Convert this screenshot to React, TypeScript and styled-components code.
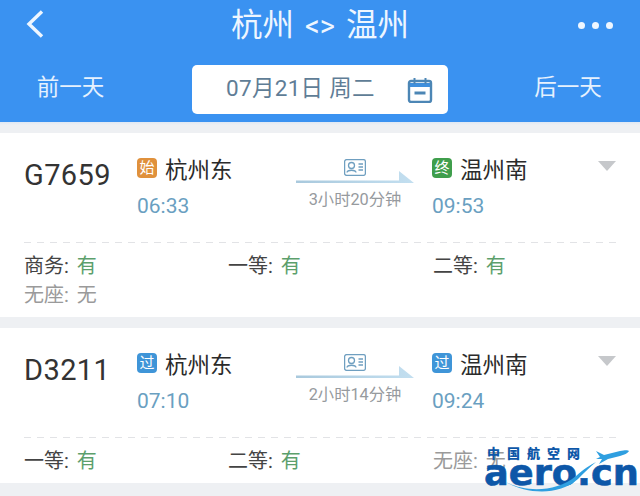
import React from "react";
import styled, { createGlobalStyle } from "styled-components";

const GlobalStyle = createGlobalStyle`
  html, body {
    margin: 0;
    padding: 0;
    background: #eef0f3;
    overflow: hidden;
  }
  * {
    box-sizing: border-box;
  }
`;

const FONT = `"Roboto", "Noto Sans CJK SC", sans-serif`;

const Page = styled.div`
  position: relative;
  width: 640px;
  height: 496px;
  overflow: hidden;
  font-family: ${FONT};
  background: #eef0f3;
`;

const Header = styled.header`
  height: 122px;
  background: #3a92f1;
  padding-top: 6px;
`;

const TopRow = styled.div`
  display: grid;
  grid-template-columns: 96px 1fr 96px;
  align-items: center;
  height: 40px;
  color: #eef6ff;
`;

const BackButton = styled.div`
  padding-left: 24px;
  padding-bottom: 5px;
  display: flex;
  align-items: center;
`;

const Title = styled.div`
  text-align: center;
  font-size: 31.5px;
  line-height: 40px;
  white-space: nowrap;
`;

const Arrows = styled.span`
  font-size: 29px;
  margin: 0 11px;
`;

const Dots = styled.div`
  display: flex;
  justify-content: flex-end;
  gap: 7px;
  padding-right: 27px;
  padding-bottom: 2px;
`;

const Dot = styled.span`
  width: 7px;
  height: 7px;
  border-radius: 50%;
  background: #eef6ff;
`;

const DateRow = styled.div`
  display: grid;
  grid-template-columns: 192px 256px 192px;
  margin-top: 19px;
  align-items: center;
`;

const DayLink = styled.div<{ $left?: boolean }>`
  color: #e6f1fe;
  font-size: 22.5px;
  line-height: 45px;
  padding-bottom: 4px;
  text-align: center;
  padding-right: ${(p) => (p.$left ? "51px" : "0")};
  padding-left: ${(p) => (p.$left ? "0" : "48px")};
`;

const DateBox = styled.div`
  height: 49px;
  background: #fff;
  border-radius: 5px;
  color: #5f7d96;
  font-size: 22.5px;
  display: flex;
  align-items: center;
  justify-content: space-between;
  padding: 0 15px 0 34px;
  letter-spacing: 0.3px;
`;

const DateText = styled.span`
  padding-bottom: 7px;
`;

const HeaderEdge = styled.div`
  height: 11px;
  background: linear-gradient(#dfe8f4 0, #eef0f3 3px);
`;

const Card = styled.section<{ $tall?: boolean }>`
  height: ${(p) => (p.$tall ? "184px" : "155px")};
  background: #fff;
  padding: 17px 24px 0;
  margin-bottom: 11px;
`;

const TrainRow = styled.div`
  display: grid;
  grid-template-columns: 113px 159px 136px 164px 1fr;
  height: 92px;
`;

const TrainNo = styled.div`
  font-size: 29px;
  line-height: 40px;
  padding-top: 5px;
  color: #333;
  letter-spacing: 0.4px;
`;

const Stop = styled.div`
  display: flex;
  flex-direction: column;
`;

const StationLine = styled.div`
  display: flex;
  align-items: center;
  gap: 8px;
  height: 36px;
  font-size: 22.5px;
  color: #2b2b2b;
`;

const Tag = styled.span<{ $bg: string }>`
  width: 20px;
  height: 20px;
  border-radius: 4px;
  background: ${(p) => p.$bg};
  color: #fff;
  font-size: 15px;
  line-height: 20px;
  text-align: center;
`;

const Time = styled.div`
  font-size: 21px;
  line-height: 30px;
  margin-top: 5px;
  color: #6a9fc1;
`;

const Middle = styled.div`
  width: 118px;
  display: flex;
  flex-direction: column;
  align-items: center;
  padding-top: 9px;
`;

const RouteSvg = styled.svg`
  margin-top: -5px;
  flex: none;
`;

const Duration = styled.div`
  font-size: 16.3px;
  line-height: 20px;
  margin-top: 6px;
  color: #969a9e;
  white-space: nowrap;
`;

const Caret = styled.div`
  justify-self: end;
  width: 0;
  height: 0;
  margin-top: 11px;
  border-left: 9px solid transparent;
  border-right: 9px solid transparent;
  border-top: 10px solid #c6c8cb;
`;

const DashLine = styled.div`
  height: 1px;
  background: repeating-linear-gradient(90deg, #e2e3e6 0 7px, transparent 7px 13px);
`;

const Seats = styled.div`
  display: grid;
  grid-template-columns: 204px 205px 1fr;
  padding-top: 9px;
`;

const Seat = styled.div<{ $muted?: boolean }>`
  font-size: 20px;
  line-height: 29px;
  color: ${(p) => (p.$muted ? "#9a9a9a" : "#444")};
`;

const SeatValue = styled.span<{ $muted?: boolean }>`
  margin-left: 8px;
  color: ${(p) => (p.$muted ? "#9a9a9a" : "#5c9f6c")};
`;

const Watermark = styled.div`
  position: absolute;
  left: 484px;
  top: 447px;
  width: 156px;
  height: 49px;
  color: #0d57a8;
`;

const MarkCn = styled.div`
  display: flex;
  gap: 7px;
  padding-left: 3px;
  font-size: 13px;
  line-height: 14px;
  font-weight: 900;
`;

const MarkLatin = styled.div`
  font-family: "DejaVu Sans", sans-serif;
  font-size: 36px;
  line-height: 30px;
  margin-top: -3px;
  font-weight: 700;
  -webkit-text-stroke: 0.6px #0d57a8;
  white-space: nowrap;
  transform: scaleX(1.02);
  transform-origin: left;
`;

const MarkArt = styled.svg`
  position: absolute;
  left: 0;
  top: 0;
`;

function ChevronBack() {
  return (
    <svg width="22" height="30" viewBox="0 0 22 30" fill="none">
      <path d="M18 2.5 L5 15 L18 27.5" stroke="#eef6ff" strokeWidth="3.4" />
    </svg>
  );
}

function CalendarIcon() {
  return (
    <svg width="26" height="26" viewBox="0 0 26 26" fill="none" stroke="#4c86b5" strokeWidth="2.4">
      <rect x="2" y="4" width="22" height="21" rx="2" />
      <path d="M3 6 H23 V10 H3 Z" fill="#3f8fdc" stroke="none" />
      <path d="M7.5 1 V7 M18.5 1 V7" strokeWidth="2" />
      <path d="M7.5 16 H18.5" strokeWidth="3" />
    </svg>
  );
}

function RouteArrow() {
  return (
    <RouteSvg width="118" height="13" viewBox="0 0 118 13">
      <defs>
        <linearGradient id="routeFade" x1="0" x2="1" y1="0" y2="0">
          <stop offset="0" stopColor="#a9c9dd" />
          <stop offset="1" stopColor="#c3dff0" />
        </linearGradient>
      </defs>
      <path d="M0 9.5 H103 V0 L118 12 H0 Z" fill="url(#routeFade)" />
    </RouteSvg>
  );
}

function IdIcon() {
  return (
    <svg width="22" height="17" viewBox="0 0 22 17" fill="none" stroke="#6f9fc0" strokeWidth="1.3">
      <rect x="0.6" y="0.6" width="20.8" height="15.8" rx="2" />
      <circle cx="7.5" cy="6.5" r="3" />
      <path d="M3 13.5 C3.5 10.5 11.5 10.5 12 13.5 M14.5 5 H19 M14.5 8 H19 M14.5 11 H19" />
    </svg>
  );
}

interface Train {
  no: string;
  from: { tag: string; color: string; time: string };
  to: { tag: string; color: string; time: string };
  duration: string;
  seats: { label: string; value: string; muted?: boolean }[];
  tall?: boolean;
}

const trains: Train[] = [
  {
    no: "G7659",
    from: { tag: "始", color: "#e0913c", time: "06:33" },
    to: { tag: "终", color: "#3f9e4c", time: "09:53" },
    duration: "3小时20分钟",
    tall: true,
    seats: [
      { label: "商务", value: "有" },
      { label: "一等", value: "有" },
      { label: "二等", value: "有" },
      { label: "无座", value: "无", muted: true },
    ],
  },
  {
    no: "D3211",
    from: { tag: "过", color: "#3f95d8", time: "07:10" },
    to: { tag: "过", color: "#3f95d8", time: "09:24" },
    duration: "2小时14分钟",
    seats: [
      { label: "一等", value: "有" },
      { label: "二等", value: "有" },
      { label: "无座", value: "无", muted: true },
    ],
  },
];

export default function App() {
  return (
    <Page>
      <GlobalStyle />
      <Header>
        <TopRow>
          <BackButton>
            <ChevronBack />
          </BackButton>
          <Title>
            杭州<Arrows>{"<>"}</Arrows>温州
          </Title>
          <Dots>
            <Dot />
            <Dot />
            <Dot />
          </Dots>
        </TopRow>
        <DateRow>
          <DayLink $left>前一天</DayLink>
          <DateBox>
            <DateText>07月21日 周二</DateText>
            <CalendarIcon />
          </DateBox>
          <DayLink>后一天</DayLink>
        </DateRow>
      </Header>
      <HeaderEdge />
      {trains.map((t) => (
        <Card key={t.no} $tall={t.tall}>
          <TrainRow>
            <TrainNo>{t.no}</TrainNo>
            <Stop>
              <StationLine>
                <Tag $bg={t.from.color}>{t.from.tag}</Tag>杭州东
              </StationLine>
              <Time>{t.from.time}</Time>
            </Stop>
            <Middle>
              <IdIcon />
              <RouteArrow />
              <Duration>{t.duration}</Duration>
            </Middle>
            <Stop>
              <StationLine>
                <Tag $bg={t.to.color}>{t.to.tag}</Tag>温州南
              </StationLine>
              <Time>{t.to.time}</Time>
            </Stop>
            <Caret />
          </TrainRow>
          <DashLine />
          <Seats>
            {t.seats.map((s) => (
              <Seat key={s.label} $muted={s.muted}>
                {s.label}:<SeatValue $muted={s.muted}>{s.value}</SeatValue>
              </Seat>
            ))}
          </Seats>
        </Card>
      ))}
      <Watermark>
        <MarkCn>
          <span>中</span>
          <span>国</span>
          <span>航</span>
          <span>空</span>
          <span>网</span>
        </MarkCn>
        <MarkLatin>aero.cn</MarkLatin>
        <MarkArt width="156" height="49" viewBox="0 0 156 49">
          <path d="M22 35 C40 45 72 46 92 29 C100 22 106 18 112 15 C106 20 101 25 94 32 C74 50 40 46 22 35 Z" fill="#2f9fe0" />
          <path d="M112 4 L120 8 L136 4 C141 3 144 3 145 4 C144 6 140 8 136 9 L124 12 L115 17 L118 12 L112 12 L116 10 Z" fill="#2f9fe0" />
        </MarkArt>
      </Watermark>
    </Page>
  );
}
